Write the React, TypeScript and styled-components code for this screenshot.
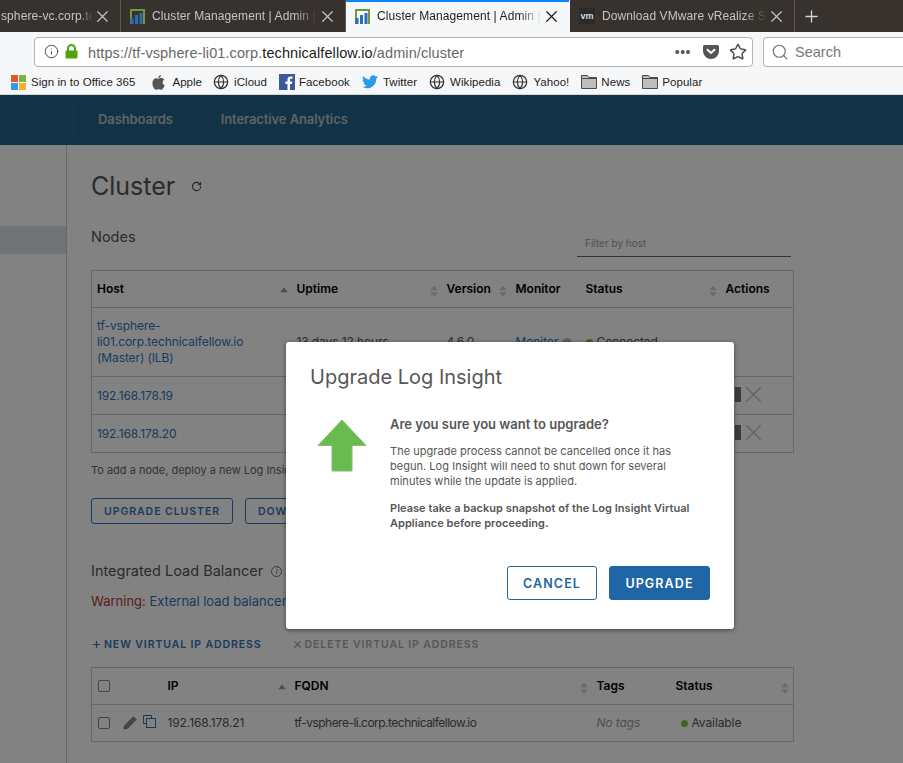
import React from "react";
import styled, { createGlobalStyle } from "styled-components";
import { X, Plus, Search, Star, Globe, Info, RotateCw } from "lucide-react";

const UI_FONT = `"Inter", "Liberation Sans", sans-serif`;
const CHROME_FONT = `"Liberation Sans", "Inter", sans-serif`;

const GlobalStyle = createGlobalStyle`
  html, body {
    margin: 0;
    padding: 0;
    width: 903px;
    height: 763px;
    overflow: hidden;
    background: #fff;
  }
  * { box-sizing: border-box; }
`;

const BOOKMARKS_TAIL = ["Wikipedia", "Yahoo!"];

function ClusterFavicon() {
  return (
    <svg width="15" height="15" viewBox="0 0 15 15">
      <path d="M0 0h15v15h-2V2H2v13H0z" fill="#6f9a3c" />
      <rect x="0.5" y="9" width="3" height="6" fill="#2a6db0" />
      <rect x="5" y="6" width="3" height="9" fill="#2a6db0" />
      <rect x="9.5" y="4" width="3" height="11" fill="#2a6db0" />
    </svg>
  );
}

function OfficeIcon() {
  return (
    <svg width="15" height="15" viewBox="0 0 15 15">
      <rect width="7" height="7" fill="#e8532b" />
      <rect x="8" width="7" height="7" fill="#7fb239" />
      <rect y="8" width="7" height="7" fill="#2f9be8" />
      <rect x="8" y="8" width="7" height="7" fill="#f8b126" />
    </svg>
  );
}

function AppleIcon() {
  return (
    <svg width="13" height="15" viewBox="0 0 13 15">
      <path
        d="M9 0c.1 1.300-1 2.900-2.700 3C6.200 1.600 7.500.2 9 0zM6.400 3.800c.7 0 1.600-.7 2.900-.7 1.200 0 2.200.6 2.900 1.600-2.300 1.400-1.900 4.500.5 5.500-.6 1.700-2 4.600-3.500 4.600-.9 0-1.300-.6-2.500-.6s-1.700.6-2.500.6C2.300 14.800.4 11.200.4 8.300.4 5.100 2.300 3.200 4.200 3.200c1 0 1.700.6 2.200.6z"
        fill="#555"
      />
    </svg>
  );
}

function FacebookIcon() {
  return (
    <svg width="16" height="16" viewBox="0 0 16 16">
      <rect width="16" height="16" fill="#3b5998" />
      <path d="M11 16v-6h2l.4-2.500H11V6c0-.8.3-1.200 1.200-1.200h1.300V2.500c-.4 0-1.100-.1-1.900-.1-1.900 0-3.100 1.100-3.100 3.200v1.900H6.400V10h2.100v6z" fill="#fff" />
    </svg>
  );
}

function TwitterIcon() {
  return (
    <svg width="16" height="14" viewBox="0 0 24 20">
      <path
        d="M24 2.400c-.9.400-1.800.7-2.800.8 1-.6 1.800-1.600 2.200-2.700-1 .6-2 1-3.100 1.200A4.900 4.900 0 0 0 11.900 6.200C7.800 6 4.200 4 1.700.9c-1.300 2.200-.7 5.100 1.500 6.600-.8 0-1.600-.2-2.200-.6 0 2.400 1.700 4.400 3.900 4.900-.7.200-1.500.2-2.200.1.600 2 2.400 3.400 4.600 3.400A9.900 9.900 0 0 1 0 17.300 14 14 0 0 0 7.500 19.500c9.100 0 14.300-7.700 14-14.600 1-.7 1.800-1.600 2.500-2.500z"
        fill="#2a9be8"
      />
    </svg>
  );
}

function FolderIcon() {
  return (
    <svg width="16" height="14" viewBox="0 0 16 14">
      <path d="M.5 13.500V.5h6l1.500 2h7.500v11z" fill="#bdbdbd" stroke="#4a4a4a" />
      <path d="M.5 3.500h15" stroke="#4a4a4a" />
    </svg>
  );
}

function PocketIcon() {
  return (
    <svg width="16" height="14" viewBox="0 0 16 14">
      <path d="M1.500 0h13A1.500 1.500 0 0 1 16 1.500V6A8 8 0 0 1 0 6V1.500A1.500 1.500 0 0 1 1.500 0z" fill="#555" />
      <path d="M4.500 4.800 8 8l3.500-3.200" fill="none" stroke="#fff" strokeWidth="2" strokeLinecap="round" />
    </svg>
  );
}

function LockIcon() {
  return (
    <svg width="13" height="15" viewBox="0 0 13 15">
      <path d="M3 7V4.500a3.500 3.500 0 0 1 7 0V7" fill="none" stroke="#4ea40c" strokeWidth="2" />
      <rect x="0.500" y="6.500" width="12" height="8" rx="1" fill="#4ea40c" />
    </svg>
  );
}

function UpgradeArrow() {
  return (
    <svg width="50" height="54" viewBox="0 0 50 54">
      <path d="M25 1 49 26.500H35V52H15V26.500H1z" fill="#6abb4f" stroke="#7fc069" strokeWidth="1" />
    </svg>
  );
}

function PencilGlyph() {
  return (
    <svg width="14" height="14" viewBox="0 0 14 14">
      <path d="M10.500.8 13.200 3.500 4.500 12.200 1 13l.8-3.500z" fill="#8c8c8c" stroke="#666" strokeWidth="0.8" strokeLinejoin="round" />
    </svg>
  );
}

function CopyGlyph() {
  return (
    <svg width="13" height="13" viewBox="0 0 13 13" fill="none" stroke="#3b6f9e">
      <path d="M3.500 8.500H.5V.5h8v3" />
      <rect x="3.500" y="3.500" width="9" height="9" />
    </svg>
  );
}

function SortCaret({ up }: { up?: boolean }) {
  return (
    <SortMark>
      {up ? (
        <svg width="8" height="5" viewBox="0 0 8 5"><path d="M4 0 8 5H0z" fill="#999" /></svg>
      ) : (
        <svg width="8" height="11" viewBox="0 0 8 11">
          <path d="M4 0 8 4.500H0zM4 11 0 6.500h8z" fill="#d2d2d2" />
        </svg>
      )}
    </SortMark>
  );
}

function TabX() {
  return <TabClose><X size={19} strokeWidth={1.5} /></TabClose>;
}

export default function App() {
  return (
    <>
      <GlobalStyle />
      <Screen>
        <TabStrip>
          <Tab $width={121} $first>
            <TabTitle>sphere-vc.corp.te</TabTitle>
            <TabX />
          </Tab>
          <Tab $width={225}>
            <ClusterFavicon />
            <TabTitle>Cluster Management | Admin | v</TabTitle>
            <TabX />
          </Tab>
          <Tab $width={224} $active>
            <ClusterFavicon />
            <TabTitle>Cluster Management | Admin | v</TabTitle>
            <TabX />
          </Tab>
          <Tab $width={225}>
            <VmBadge>vm</VmBadge>
            <TabTitle>Download VMware vRealize Sui</TabTitle>
            <TabX />
          </Tab>
          <NewTab><Plus size={19} strokeWidth={1.7} /></NewTab>
        </TabStrip>

        <Toolbar>
          <UrlBar>
            <Info size={15} strokeWidth={1.5} color="#444" />
            <LockIcon />
            <UrlText>
              https://tf-vsphere-li01.corp.<strong>technicalfellow.io</strong>/admin/cluster
            </UrlText>
            <UrlDots>•••</UrlDots>
            <PocketIcon />
            <StarSlot><Star size={18} strokeWidth={2} color="#4a4a4a" /></StarSlot>
          </UrlBar>
          <SearchBox>
            <Search size={18} strokeWidth={1.6} color="#777" />
            <span>Search</span>
          </SearchBox>
        </Toolbar>

        <BookmarkBar>
          <Bookmark $after={5}><OfficeIcon />Sign in to Office 365</Bookmark>
          <Bookmark $gap={7} $after={-1}><AppleIcon />Apple</Bookmark>
          <Bookmark><Globe size={16} strokeWidth={1.8} color="#333" />iCloud</Bookmark>
          <Bookmark $gap={4}><FacebookIcon />Facebook</Bookmark>
          <Bookmark><TwitterIcon />Twitter</Bookmark>
          {BOOKMARKS_TAIL.map((name) => (
            <Bookmark key={name}><Globe size={16} strokeWidth={1.8} color="#333" />{name}</Bookmark>
          ))}
          <Bookmark $gap={4}><FolderIcon />News</Bookmark>
          <Bookmark $gap={4}><FolderIcon />Popular</Bookmark>
        </BookmarkBar>

        <WebPage>
          <AppHeader>
            <HeaderNav>
              <NavLink>Dashboards</NavLink>
              <NavLink>Interactive Analytics</NavLink>
            </HeaderNav>
          </AppHeader>

          <Body>
            <SideNav>
              <SideItem />
            </SideNav>
            <Content>
              <TitleRow>
                <PageTitle>Cluster</PageTitle>
                <RotateCw size={11} strokeWidth={2.2} color="#444" />
              </TitleRow>

              <NodesHead>
                <SectionTitle>Nodes</SectionTitle>
                <FilterBox>Filter by host</FilterBox>
              </NodesHead>

              <DataTable>
                <colgroup>
                  <col style={{ width: 200 }} />
                  <col style={{ width: 150 }} />
                  <col style={{ width: 69 }} />
                  <col style={{ width: 70 }} />
                  <col style={{ width: 140 }} />
                  <col style={{ width: 73 }} />
                </colgroup>
                <thead>
                  <tr>
                    <HeadCell>Host<SortCaret up /></HeadCell>
                    <HeadCell>Uptime<SortCaret /></HeadCell>
                    <HeadCell>Version<SortCaret /></HeadCell>
                    <HeadCell>Monitor</HeadCell>
                    <HeadCell>Status<SortCaret /></HeadCell>
                    <HeadCell>Actions</HeadCell>
                  </tr>
                </thead>
                <tbody>
                  <tr>
                    <BodyCell $height={69}>
                      <HostLink>tf-vsphere-<br />li01.corp.technicalfellow.io<br />(Master) (ILB)</HostLink>
                    </BodyCell>
                    <BodyCell>13 days 12 hours</BodyCell>
                    <BodyCell>4.6.0</BodyCell>
                    <BodyCell><HostLink>Monitor</HostLink><HelpDot /></BodyCell>
                    <BodyCell><StatusDot />Connected</BodyCell>
                    <BodyCell />
                  </tr>
                  {["192.168.178.19", "192.168.178.20"].map((ip) => (
                    <tr key={ip}>
                      <BodyCell $height={38}><HostLink>{ip}</HostLink></BodyCell>
                      <BodyCell />
                      <BodyCell />
                      <BodyCell />
                      <BodyCell />
                      <BodyCell>
                        <RowActions>
                          <DarkBar />
                          <X size={27} strokeWidth={1.2} color="#c4c4c4" />
                        </RowActions>
                      </BodyCell>
                    </tr>
                  ))}
                </tbody>
              </DataTable>

              <Hint>To add a node, deploy a new Log Insight instance</Hint>

              <ButtonRow>
                <OutlineButton>Upgrade Cluster</OutlineButton>
                <OutlineButton>Download</OutlineButton>
              </ButtonRow>

              <BalancerTitle>
                Integrated Load Balancer
                <InfoMark>i</InfoMark>
              </BalancerTitle>
              <WarningLine>
                <WarnWord>Warning:</WarnWord> External load balancer
              </WarningLine>

              <ActionRow>
                <TextAction><Plus size={11} strokeWidth={2.6} />New Virtual IP Address</TextAction>
                <TextAction $disabled><X size={11} strokeWidth={3} />Delete Virtual IP Address</TextAction>
              </ActionRow>

              <DataTable>
                <colgroup>
                  <col style={{ width: 71 }} />
                  <col style={{ width: 127 }} />
                  <col style={{ width: 302 }} />
                  <col style={{ width: 79 }} />
                  <col style={{ width: 123 }} />
                </colgroup>
                <thead>
                  <tr>
                    <HeadCell><CheckBox /></HeadCell>
                    <HeadCell>IP<SortCaret up /></HeadCell>
                    <HeadCell>FQDN<SortCaret /></HeadCell>
                    <HeadCell>Tags</HeadCell>
                    <HeadCell>Status<SortCaret /></HeadCell>
                  </tr>
                </thead>
                <tbody>
                  <tr>
                    <BodyCell $height={37}>
                      <EditTools>
                        <CheckBox />
                        <PencilGlyph />
                        <CopySlot><CopyGlyph /></CopySlot>
                      </EditTools>
                    </BodyCell>
                    <BodyCell $height={37}>192.168.178.21</BodyCell>
                    <BodyCell $height={37} $tight>tf-vsphere-li.corp.technicalfellow.io</BodyCell>
                    <BodyCell $height={37}><NoTags>No tags</NoTags></BodyCell>
                    <BodyCell $height={37}><StatusDot $inset />Available</BodyCell>
                  </tr>
                </tbody>
              </DataTable>
            </Content>
          </Body>

          <Backdrop />

          <Modal>
            <ModalTitle>Upgrade Log Insight</ModalTitle>
            <ModalBody>
              <ArrowColumn><UpgradeArrow /></ArrowColumn>
              <ModalCopy>
                <Question>Are you sure you want to upgrade?</Question>
                <Paragraph>
                  The upgrade process cannot be cancelled once it has begun. Log Insight will need to shut down for several minutes while the update is applied.
                </Paragraph>
                <BoldParagraph>
                  Please take a backup snapshot of the Log Insight Virtual Appliance before proceeding.
                </BoldParagraph>
              </ModalCopy>
            </ModalBody>
            <ModalFooter>
              <CancelButton>Cancel</CancelButton>
              <PrimaryButton>Upgrade</PrimaryButton>
            </ModalFooter>
          </Modal>
        </WebPage>
      </Screen>
    </>
  );
}

const Screen = styled.div`
  width: 903px;
  height: 763px;
  display: flex;
  flex-direction: column;
  overflow: hidden;
  font-family: ${UI_FONT};
`;

const TabStrip = styled.div`
  height: 32px;
  display: flex;
  flex: none;
  background: #38322e;
  font-family: ${CHROME_FONT};
`;

const Tab = styled.div<{ $width: number; $active?: boolean; $first?: boolean }>`
  width: ${(p) => p.$width}px;
  flex: none;
  display: flex;
  align-items: center;
  gap: 7px;
  padding: ${(p) => (p.$first ? "0 8px 0 1px" : "0 8px 0 9px")};
  background: ${(p) => (p.$active ? "#f6f7f9" : "transparent")};
  color: ${(p) => (p.$active ? "#1c1c1c" : "#c6c4c2")};
  border-right: 1px solid ${(p) => (p.$active ? "transparent" : "#5c5855")};
  box-shadow: ${(p) => (p.$active ? "inset 0 2px 0 #0a84ff" : "none")};
  font-size: 12px;
`;

const TabTitle = styled.span`
  flex: 1;
  min-width: 0;
  white-space: nowrap;
  letter-spacing: 0.1px;
  mask-image: linear-gradient(to right, #000 86%, transparent);
`;

const TabClose = styled.span`
  display: flex;
  flex: none;
  margin-left: -7px;
`;

const VmBadge = styled.span`
  width: 16px;
  height: 16px;
  flex: none;
  display: flex;
  align-items: center;
  justify-content: center;
  background: #2b2a29;
  color: #d8d8d8;
  font-size: 9px;
  font-weight: 700;
`;

const NewTab = styled.div`
  flex: 1;
  display: flex;
  align-items: center;
  padding-left: 7px;
  color: #d4d3d2;
`;

const Toolbar = styled.div`
  height: 38px;
  flex: none;
  display: flex;
  align-items: center;
  gap: 10px;
  padding: 5px 0 4px 34px;
  background: #f6f7f9;
  font-family: ${CHROME_FONT};
`;

const UrlBar = styled.div`
  width: 719px;
  height: 30px;
  flex: none;
  display: flex;
  align-items: center;
  gap: 6px;
  padding: 0 5px 0 9px;
  background: #fff;
  border: 1px solid #b3b3b3;
  border-radius: 4px;
`;

const UrlText = styled.span`
  flex: 1;
  margin-left: 4px;
  padding-top: 2px;
  color: #686868;
  font-size: 14.500px;
  letter-spacing: 0.09px;
  white-space: nowrap;

  strong {
    color: #1c1c1c;
    font-weight: 400;
  }
`;

const UrlDots = styled.span`
  margin-right: 6px;
  color: #555;
  font-size: 14px;
  letter-spacing: 0.5px;
`;

const StarSlot = styled.span`
  display: flex;
  margin-left: 4px;
`;

const SearchBox = styled.div`
  flex: 1;
  height: 30px;
  display: flex;
  align-items: center;
  gap: 6px;
  padding-left: 7px;
  background: #fff;
  border: 1px solid #b3b3b3;
  border-right: 0;
  border-radius: 4px 0 0 4px;
  color: #777;
  font-size: 14.500px;
`;

const BookmarkBar = styled.div`
  height: 25px;
  flex: none;
  display: flex;
  align-items: center;
  gap: 12px;
  padding-left: 11px;
  background: #f6f7f9;
  border-bottom: 1px solid #d6d6d6;
  font-family: ${CHROME_FONT};
`;

const Bookmark = styled.span<{ $gap?: number; $after?: number }>`
  display: flex;
  align-items: center;
  gap: ${(p) => p.$gap ?? 5}px;
  margin-right: ${(p) => p.$after ?? 0}px;
  color: #1d1d1d;
  font-size: 11.500px;
  letter-spacing: 0.05px;
  white-space: nowrap;
`;

const WebPage = styled.div`
  position: relative;
  flex: 1;
  min-height: 0;
  display: flex;
  flex-direction: column;
  background: #fff;
`;

const AppHeader = styled.header`
  height: 50px;
  flex: none;
  display: flex;
  align-items: center;
  padding-left: 73px;
  background: #246389;
`;

const HeaderNav = styled.nav`
  height: 36px;
  display: flex;
  align-items: center;
  gap: 48px;
  padding: 0 0 2px 24px;
  border-left: 1px solid #2e6e94;
`;

const NavLink = styled.span`
  color: #b5c3cc;
  font-size: 13px;
  font-weight: 600;
  letter-spacing: -0.1px;
`;

const Body = styled.div`
  flex: 1;
  min-height: 0;
  display: flex;
`;

const SideNav = styled.aside`
  width: 67px;
  flex: none;
  padding-top: 81px;
  border-right: 1px solid #ccc;
`;

const SideItem = styled.div`
  height: 28px;
  background: #d9e4ea;
`;

const Content = styled.main`
  width: 702px;
  margin-left: 24px;
  flex: none;
  color: #565656;
`;

const TitleRow = styled.div`
  height: 34px;
  margin-top: 24px;
  display: flex;
  align-items: center;
  gap: 16px;
`;

const PageTitle = styled.h1`
  margin: 0;
  color: #555;
  font-size: 25px;
  font-weight: 400;
  line-height: 34px;
`;

const NodesHead = styled.div`
  height: 45px;
  margin-top: 22px;
  display: flex;
  justify-content: space-between;
  align-items: flex-start;
`;

const SectionTitle = styled.h2`
  margin: 0;
  color: #565656;
  font-size: 14.500px;
  font-weight: 400;
  line-height: 24px;
`;

const FilterBox = styled.div`
  width: 214px;
  height: 32px;
  margin-right: 2px;
  padding: 7px 8px 0;
  border-bottom: 1px solid #666;
  color: #a0a0a0;
  font-size: 10px;
  line-height: 22px;
`;

const DataTable = styled.table`
  width: 702px;
  table-layout: fixed;
  border-collapse: collapse;
  border: 1px solid #ccc;
  font-size: 12px;
`;

const HeadCell = styled.th`
  position: relative;
  height: 37px;
  padding: 0 5px 2px;
  border-bottom: 1px solid #ccc;
  color: #000;
  font-size: 12px;
  font-weight: 600;
  text-align: left;
`;

const BodyCell = styled.td<{ $height?: number; $tight?: boolean }>`
  height: ${(p) => (p.$height ? `${p.$height}px` : "auto")};
  padding: 0 5px;
  border-bottom: 1px solid #ccc;
  color: #565656;
  font-size: 12px;
  letter-spacing: ${(p) => (p.$tight ? "-0.52px" : "-0.1px")};
  line-height: 16px;
`;

const SortMark = styled.span`
  position: absolute;
  top: 50%;
  right: 4px;
  display: flex;
  transform: translateY(-30%);
`;

const HostLink = styled.span`
  color: #3275ba;
`;

const HelpDot = styled.span`
  display: inline-block;
  width: 10px;
  height: 10px;
  margin-left: 4px;
  border-radius: 50%;
  background: #bbb;
  vertical-align: middle;
`;

const StatusDot = styled.span<{ $inset?: boolean }>`
  display: inline-block;
  width: 7px;
  height: 7px;
  margin: 0 4px 0 ${(p) => (p.$inset ? "5px" : "0")};
  border-radius: 50%;
  background: #7ec13e;
  vertical-align: 0;
`;

const RowActions = styled.div`
  display: flex;
  align-items: center;
  padding: 0 0 3px 9px;

  svg {
    margin-left: -1px;
  }
`;

const DarkBar = styled.span`
  width: 6px;
  height: 15px;
  background: #777;
`;

const Hint = styled.p`
  margin: 8px 0 0;
  color: #666;
  font-size: 11px;
  line-height: 18px;
`;

const ButtonRow = styled.div`
  display: flex;
  gap: 12px;
  margin-top: 19px;
`;

const OutlineButton = styled.button`
  height: 26px;
  padding: 0 12px;
  background: transparent;
  border: 1px solid #3275ba;
  border-radius: 3px;
  color: #3275ba;
  font-family: ${UI_FONT};
  font-size: 10.500px;
  font-weight: 600;
  letter-spacing: 0.95px;
  text-transform: uppercase;
  white-space: nowrap;
`;

const BalancerTitle = styled.h2`
  display: flex;
  align-items: center;
  gap: 8px;
  margin: 35px 0 0;
  color: #565656;
  font-size: 14.500px;
  font-weight: 400;
  line-height: 24px;
`;

const InfoMark = styled.span`
  width: 11px;
  height: 11px;
  display: flex;
  align-items: center;
  justify-content: center;
  border: 1px solid #777;
  border-radius: 50%;
  font-size: 8px;
  font-style: italic;
`;

const WarningLine = styled.p`
  margin: 9px 0 0;
  color: #3275ba;
  font-size: 13px;
  line-height: 18px;
`;

const WarnWord = styled.span`
  color: #b23a3a;
`;

const ActionRow = styled.div`
  display: flex;
  gap: 30px;
  margin: 27px 0 15px;
  height: 15px;
  align-items: center;
`;

const TextAction = styled.span<{ $disabled?: boolean }>`
  display: flex;
  align-items: center;
  gap: 2px;
  color: ${(p) => (p.$disabled ? "#ababab" : "#3275ba")};
  font-size: 10.500px;
  font-weight: 600;
  letter-spacing: 0.9px;
  text-transform: uppercase;
  white-space: nowrap;
`;

const CheckBox = styled.span`
  display: inline-block;
  flex: none;
  width: 12px;
  height: 12px;
  margin-left: 1px;
  border: 1px solid #888;
  border-radius: 2px;
  vertical-align: middle;
`;

const EditTools = styled.div`
  display: flex;
  align-items: center;
  gap: 13px;
`;

const CopySlot = styled.span`
  display: flex;
  margin: -3px 0 0 -7px;
`;

const NoTags = styled.span`
  color: #999;
  font-style: italic;
`;

const Backdrop = styled.div`
  position: absolute;
  inset: 0;
  background: rgba(0, 0, 0, 0.49);
`;

const Modal = styled.section`
  position: absolute;
  top: 247px;
  left: 286px;
  width: 448px;
  height: 287px;
  display: flex;
  flex-direction: column;
  padding: 21px 24px 29px;
  background: #fff;
  border-radius: 3px;
  box-shadow: 0 1px 4px rgba(0, 0, 0, 0.5);
`;

const ModalTitle = styled.h3`
  margin: 0;
  color: #565656;
  font-size: 20px;
  font-weight: 400;
  line-height: 28px;
`;

const ModalBody = styled.div`
  flex: 1;
  display: flex;
  margin-top: 24px;
`;

const ArrowColumn = styled.div`
  width: 80px;
  flex: none;
  padding: 4px 0 0 7px;
`;

const ModalCopy = styled.div`
  flex: 1;
  min-width: 0;
  padding-right: 14px;
`;

const Question = styled.p`
  margin: 0 0 11px;
  color: #565656;
  font-size: 13px;
  font-weight: 600;
  line-height: 18px;
`;

const Paragraph = styled.p`
  margin: 0 0 12px;
  color: #565656;
  font-size: 11px;
  letter-spacing: 0.03px;
  line-height: 15px;
`;

const BoldParagraph = styled(Paragraph)`
  font-weight: 600;
`;

const ModalFooter = styled.div`
  display: flex;
  justify-content: flex-end;
  gap: 12px;
`;

const CancelButton = styled.button`
  width: 90px;
  height: 34px;
  background: #fff;
  border: 1px solid #2066a6;
  border-radius: 3px;
  color: #2066a6;
  font-family: ${UI_FONT};
  font-size: 12.500px;
  font-weight: 600;
  letter-spacing: 1.1px;
  text-transform: uppercase;
`;

const PrimaryButton = styled(CancelButton)`
  width: 101px;
  background: #2066a6;
  color: #fff;
`;
